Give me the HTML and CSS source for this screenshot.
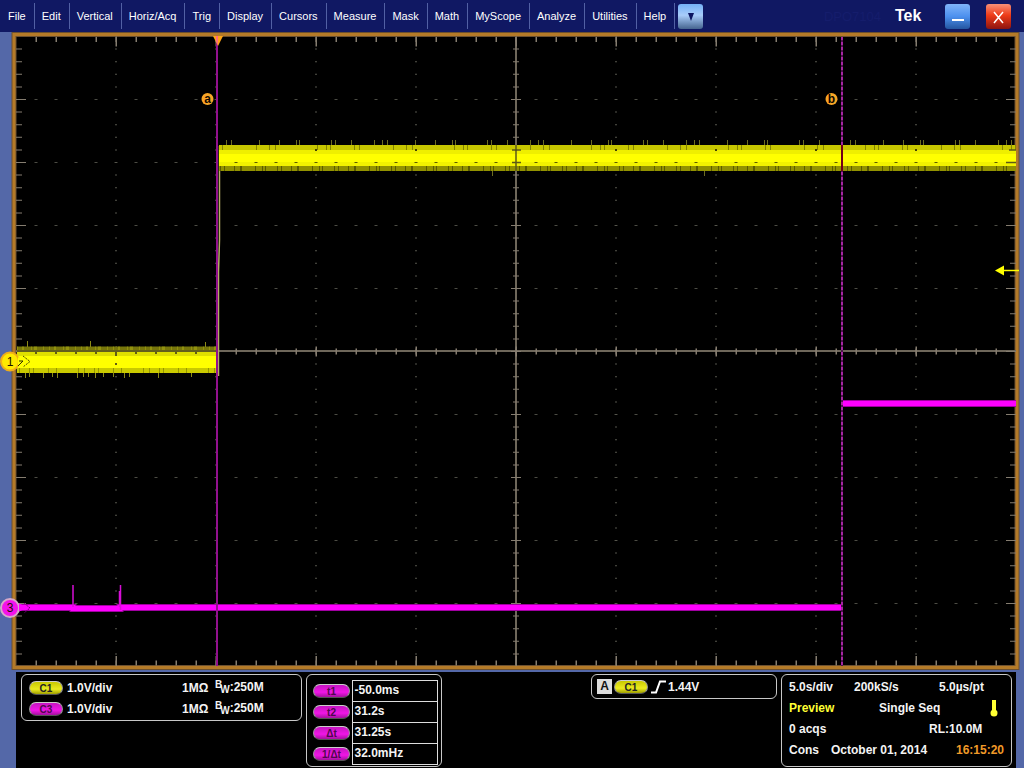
FILE: index.html
```html
<!DOCTYPE html>
<html lang="en">
<head>
<meta charset="utf-8">
<title>Tek</title>
<link rel="stylesheet" href="styles.css">
</head>
<body>
<header class="topbar">
  <nav class="menu" aria-label="Main menu">
    <button class="menu-item">File</button>
    <button class="menu-item">Edit</button>
    <button class="menu-item">Vertical</button>
    <button class="menu-item">Horiz/Acq</button>
    <button class="menu-item">Trig</button>
    <button class="menu-item">Display</button>
    <button class="menu-item">Cursors</button>
    <button class="menu-item">Measure</button>
    <button class="menu-item">Mask</button>
    <button class="menu-item">Math</button>
    <button class="menu-item">MyScope</button>
    <button class="menu-item">Analyze</button>
    <button class="menu-item">Utilities</button>
    <button class="menu-item">Help</button>
    <button class="square-button more" aria-label="More menus"><svg width="8" height="9" viewBox="0 0 8 9"><path d="M1 1h6L4 9z" fill="#0c1460"/></svg></button>
  </nav>
  <span class="model">DPO7104</span>
  <span class="brand">Tek</span>
  <button class="square-button minimize" aria-label="Minimize"><svg width="24" height="24" viewBox="0 0 24 24"><path d="M6 16h12" stroke="#fff" stroke-width="2"/></svg></button>
  <button class="square-button close" aria-label="Close"><svg width="24" height="24" viewBox="0 0 24 24"><path d="M7 8l9 11M16 8l-9 11" stroke="#fff" stroke-width="1.5"/></svg></button>
</header>

<main>
<svg class="scope" viewBox="0 32 1024 640" role="img" aria-label="Waveform display">
  <rect x="14" y="34.5" width="1003" height="633" fill="#000" stroke="#6c5030" stroke-width="5"/>
  <rect x="14" y="34.5" width="1003" height="633" fill="none" stroke="#b47a28" stroke-width="3"/>

  <g fill="none" stroke="#6c6c60">
    <g stroke-width="1" stroke-dasharray="3 17" stroke="#4c4c44">
      <path d="M34.500 99.500H1012M34.500 162.500H1012M34.500 225.500H1012M34.500 288.500H1012M34.500 414.500H1012M34.500 477.500H1012M34.500 540.500H1012M34.500 603.500H1012"/>
    </g>
    <g stroke-width="2" stroke-dasharray="1 11.600" stroke="#55554c">
      <path d="M116 48.600V662M216 48.600V662M316 48.600V662M416 48.600V662M616 48.600V662M716 48.600V662M816 48.600V662M916 48.600V662"/>
    </g>
    <g stroke="#857d70">
      <path d="M16 351H1016M516 37V666" stroke="#6e675a" stroke-width="2"/>
      <path d="M35.500 351.500H1014" stroke-width="6" stroke-dasharray="1.500 18.500"/>
      <path d="M115.500 351.500H1014" stroke-width="10" stroke-dasharray="1.500 98.500"/>
      <path d="M516 48.600V664" stroke-width="6" stroke-dasharray="1 11.600"/>
      <path d="M516 99V664" stroke-width="10" stroke-dasharray="1 62"/>
      <path d="M35.500 39.500H1014M35.500 663H1014" stroke-width="5" stroke-dasharray="1.500 18.500"/>
      <path d="M115.500 41.500H1014M115.500 661H1014" stroke-width="10" stroke-dasharray="1.500 98.500"/>
      <path d="M19 48.600V664M1013 48.600V664" stroke-width="6" stroke-dasharray="1 11.600"/>
      <path d="M21 99V664M1011 99V664" stroke-width="10" stroke-dasharray="1 62"/>
    </g>
  </g>

  <!-- Channel 1 before the edge -->
  <rect x="17" y="346.500" width="200" height="4" fill="#77760b"/>
  <path d="M17 348.500H217" stroke="#a5a511" stroke-width="4" stroke-dasharray="1 4 2 7 1 2 3 6 1 5" opacity=".6"/>
  <path d="M17 351H217" stroke="#64601c" stroke-width="2"/>
  <rect x="17" y="352" width="200" height="21" fill="#e0e000"/>
  <rect x="17" y="356" width="200" height="12" fill="#ff0"/>
  <rect x="17" y="368" width="200" height="5" fill="#caca00"/>
  <path d="M19 370.500H217" stroke="#969600" stroke-width="5" stroke-dasharray="1 9 1 3 1 14 1 7 1 21 1 5"/>
  <path d="M27.500 341v6M90.500 341v6M205.500 342v5M25.500 373v5M29.500 373v4M43.500 373v5M52.500 373v4M57.500 373v5M77.500 373v5M83.500 373v4M88.500 373v4M95.500 373v5M103.500 373v4M113.500 373v4M124.500 373v5M129.500 373v4M158.500 373v5M191.500 373v4" stroke="#8b8a16"/>
  <path d="M35 352h2v2h-2zM55 352h2v2h-2zM75 352h2v2h-2zM95 352h2v2h-2zM115 352h2v4h-2zM115 363h2v2h-2zM135 352h2v2h-2zM155 352h2v2h-2zM175 352h2v2h-2zM195 352h2v2h-2z" fill="#625e13"/>

  <!-- Channel 1 after the edge -->
  <path d="M219.500 146V240L218.500 272V376" fill="none" stroke="#b4ac66" stroke-width="1.500"/>
  <rect x="219" y="145" width="797" height="26" fill="#ff0"/>
  <rect x="219" y="145" width="797" height="5" fill="#c6c600"/>
  <rect x="219" y="150" width="797" height="4" fill="#efef00"/>
  <rect x="219" y="162" width="797" height="4" fill="#f2f200"/>
  <rect x="219" y="166" width="797" height="5" fill="#929200"/>
  <path d="M222 147.500H1016" stroke="#848400" stroke-width="5" stroke-dasharray="1 33 1 12 1 5 1 41 1 8 1 3 1 23 1 4"/>
  <path d="M220 168.500H1016" stroke="#5c5c00" stroke-width="5" stroke-dasharray="1 3 1 9 1 5 2 13 1 6 1 2 1 11"/>
  <path d="M226 142.500H1013" stroke="#6c6c20" stroke-width="5" stroke-dasharray="1 4 1 27 1 19 1 16 1 2 1 31 1 3 1 15 1 22 1 7"/>
  <path d="M492.500 171v5M704.500 171v5" stroke="#6c6c20"/>
  <path d="M234.500 162.500H1012" stroke="#5b5b00" stroke-dasharray="3 17"/>
  <path d="M315 150H1012" stroke="#444400" stroke-width="2" stroke-dasharray="2 98"/>
  <path d="M516 145v26M512 150h9M512 162.500h9M1009 150h7M1006 162.500h10" stroke="#5c5918" stroke-width="1.500"/>

  <!-- Channel 3 -->
  <g fill="none">
    <path d="M17 607.500H73V608.500H120V607.500H842" stroke="#a000a0" stroke-width="7"/>
    <path d="M17 607.500H73V608.500H120V607.500H842" stroke="#f0f" stroke-width="5"/>
    <path d="M73 607V585M119.500 607V591M120.500 610V585" stroke="#d60ed6" stroke-width="1.500"/>
    <path d="M843 403.500H1016" stroke="#a000a0" stroke-width="7"/>
    <path d="M843 403.500H1016" stroke="#f0f" stroke-width="5"/>
  </g>

  <!-- Cursors -->
  <path d="M217 37V666" stroke="#92118e" stroke-width="2"/>
  <path d="M842 37V666" stroke="#4f124e" stroke-width="2"/>
  <path d="M842 37V666" stroke="#a626a2" stroke-width="2" stroke-dasharray="3 2"/>
  <path d="M842 145V171" stroke="#720018" stroke-width="2"/>
  <path d="M213 36h10l-5 10z" fill="#ffa514"/>
  <path d="M216 36h2v9l-2-4z" fill="#ff6a80"/>
  <circle cx="207.500" cy="99" r="6" fill="#f8a526"/>
  <text class="cursor-label" x="207.500" y="103">a</text>
  <circle cx="831.500" cy="99" r="6" fill="#f8a526"/>
  <text class="cursor-label" x="831.500" y="103">b</text>

  <path d="M995 270.500l9-5v10z" fill="#ff0"/>
  <path d="M1003 270.500h16" stroke="#ff0" stroke-width="1.500"/>

  <!-- Channel handles -->
  <circle cx="10" cy="361.500" r="9" fill="#ffe900" stroke="#f0ae18" stroke-width="2"/>
  <path d="M18 357l6 4.500-6 4.500z" fill="#ff0"/>
  <path d="M23 356l7 5.500-7 5.500" fill="none" stroke="#4a4a00" stroke-dasharray="2 1"/>
  <path d="M18 366l5-5h-4" fill="none" stroke="#333000"/>
  <text class="channel-label" x="10" y="365.500">1</text>
  <circle cx="10" cy="608" r="9" fill="#f313eb" stroke="#d6a8c9" stroke-width="2"/>
  <path d="M19 603.500l9 4-9 4z" fill="#f0f"/>
  <path d="M24 603l6 5-6 5" fill="none" stroke="#750075" stroke-dasharray="2 1"/>
  <text class="channel-label" x="10" y="612">3</text>
</svg>
</main>

<footer class="readouts">
  <section class="panel channels">
    <div class="row"><span class="pill yellow">C1</span><span class="scale">1.0V/div</span><span class="impedance">1MΩ</span><span class="bandwidth"><sup>B</sup><sub>W</sub>:250M</span></div>
    <div class="row"><span class="pill magenta">C3</span><span class="scale">1.0V/div</span><span class="impedance">1MΩ</span><span class="bandwidth"><sup>B</sup><sub>W</sub>:250M</span></div>
  </section>
  <section class="panel cursors">
    <table class="cursor-table">
      <tr><th scope="row"><span class="pill magenta">t1</span></th><td>-50.0ms</td></tr>
      <tr><th scope="row"><span class="pill magenta">t2</span></th><td>31.2s</td></tr>
      <tr><th scope="row"><span class="pill magenta">Δt</span></th><td>31.25s</td></tr>
      <tr><th scope="row"><span class="pill magenta">1/Δt</span></th><td>32.0mHz</td></tr>
    </table>
  </section>
  <section class="panel trigger">
    <div class="row"><span class="source">A</span><span class="pill yellow">C1</span><svg class="edge" width="15" height="14" viewBox="0 0 15 14"><path d="M0 12.500h5L9 1.500h6" fill="none" stroke="#fff" stroke-width="2"/></svg><span>1.44V</span></div>
  </section>
  <section class="panel acquisition">
    <div class="row"><span class="time-scale">5.0s/div</span><span class="rate">200kS/s</span><span>5.0µs/pt</span></div>
    <div class="row"><span class="state">Preview</span><span>Single Seq</span><svg class="thermo" width="8" height="18" viewBox="0 0 8 18"><path d="M4 1v13" stroke="#ff3" stroke-width="4"/><circle cx="4" cy="14" r="3.500" fill="#ff3"/></svg></div>
    <div class="row"><span class="count">0 acqs</span><span>RL:10.0M</span></div>
    <div class="row"><span class="cons">Cons</span><span class="date">October 01, 2014</span><time class="clock">16:15:20</time></div>
  </section>
</footer>
</body>
</html>
```
FILE: styles.css
```css
* {
  box-sizing: border-box;
}

body {
  margin: 0;
  background: #5468a8;
  color: #f4f4f4;
  font-family: "Liberation Sans", Arial, sans-serif;
}

button {
  margin: 0;
  padding: 0;
  border: 0;
  color: inherit;
  font: inherit;
}

.topbar {
  display: flex;
  align-items: center;
  height: 32px;
  padding-right: 13px;
  background: #101863;
}

.menu {
  display: flex;
  align-items: center;
  flex: 1;
  padding-left: 1px;
  font-size: 11px;
}

.menu-item {
  height: 26px;
  padding: 0 8px 0 7px;
  border-right: 1px solid #5260a4;
  background: none;
  color: #fff;
  white-space: nowrap;
}

.square-button {
  display: flex;
  align-items: center;
  justify-content: center;
  width: 25px;
  height: 25px;
  border-radius: 3px;
}

.more {
  margin-left: 3px;
  background: linear-gradient(#74b0f6, #a8ccfa 45%, #45648f);
}

.minimize {
  margin-right: 16px;
  background: linear-gradient(#80b4fa, #4c90ee 50%, #2455a0);
}

.close {
  background: linear-gradient(#f69078, #ee3b18 45%, #8c1410);
}

.model {
  margin-right: 14px;
  color: #151d6c;
  font-size: 13px;
}

.brand {
  width: 50px;
  color: #fff;
  font-size: 16px;
  font-weight: bold;
}

.scope {
  display: block;
  width: 100%;
}

.cursor-label {
  fill: #100800;
  font-size: 12px;
  font-weight: bold;
  text-anchor: middle;
}

.channel-label {
  fill: #201000;
  font-size: 12px;
  text-anchor: middle;
}

.readouts {
  display: flex;
  align-items: flex-start;
  gap: 4px;
  min-height: 96px;
  margin: 0 8px 0 16px;
  padding: 2px 4px 0 5px;
  background: #000;
  font-size: 12px;
  font-weight: bold;
}

.panel {
  border: 1px solid #c8c8c8;
  border-radius: 6px;
  white-space: nowrap;
}

.row {
  display: flex;
  align-items: center;
  height: 21px;
}

.channels {
  width: 281px;
  padding: 2px 7px 1px;
}

.pill {
  display: inline-block;
  width: 34px;
  height: 14px;
  border: 1px solid #a8a8a8;
  border-color: #ccc #999 #555;
  border-radius: 7px;
  color: #222;
  font-size: 10px;
  line-height: 13px;
  text-align: center;
}

.yellow {
  background: linear-gradient(#c8c800, #eaea20 60%, #a0a000);
}

.magenta {
  background: linear-gradient(#c515c0, #f016e6 60%, #a5109f);
  color: #50084d;
}

.scale {
  width: 115px;
  margin-left: 4px;
}

.impedance {
  width: 33px;
}

.bandwidth sup,
.bandwidth sub {
  font-size: 10px;
  line-height: 10px;
}

.bandwidth sup {
  vertical-align: 3px;
}

.bandwidth sub {
  margin-left: -2px;
  vertical-align: -2px;
}

.cursors {
  width: 136px;
  padding: 5px 3px 1px 6px;
}

.cursor-table {
  width: 100%;
  border-collapse: collapse;
}

.cursor-table th {
  width: 39px;
  padding: 0;
  text-align: left;
  line-height: 14px;
}

.cursor-table .pill {
  width: 37px;
  vertical-align: middle;
}

.cursor-table td {
  height: 21px;
  padding: 0 0 2px 2px;
  border: 1px solid #ddd;
}

.trigger {
  width: 186px;
  margin-left: auto;
  padding: 1px 5px;
}

.source {
  width: 15px;
  height: 15px;
  margin-right: 2px;
  background: #ddd;
  color: #111;
  line-height: 15px;
  text-align: center;
}

.edge {
  margin: 0 2px 0 3px;
}

.acquisition {
  width: 231px;
  padding: 1px 7px 6px;
}

.time-scale {
  width: 65px;
}

.rate {
  width: 85px;
}

.state {
  width: 90px;
  color: #ff3;
}

.thermo {
  margin-left: auto;
  margin-right: 6px;
}

.count {
  width: 140px;
}

.cons {
  width: 42px;
}

.date {
  flex: 1;
}

.clock {
  color: #f09a28;
}
```
